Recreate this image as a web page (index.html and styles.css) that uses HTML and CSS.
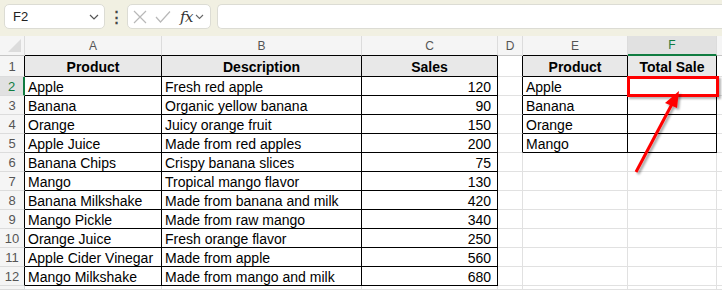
FILE: index.html
```html
<!DOCTYPE html>
<html>
<head>
<meta charset="utf-8">
<link rel="stylesheet" href="styles.css">
</head>
<body>
<div class="app">
  <div class="toolbar">
    <div class="namebox"><span class="nb-text">F2</span>
      <svg class="chev" width="10" height="6" viewBox="0 0 10 6"><path d="M1 1 L5 5 L9 1" fill="none" stroke="#555" stroke-width="1.2"/></svg>
    </div>
    <div class="vdots">⋮</div>
    <div class="fxbox">
      <svg width="14" height="14" viewBox="0 0 14 14"><path d="M1 1 L13 13 M13 1 L1 13" stroke="#b8b8b8" stroke-width="1.2" fill="none"/></svg>
      <svg width="16" height="14" viewBox="0 0 16 14"><path d="M1 7 L5.5 12 L15 1.5" stroke="#b8b8b8" stroke-width="1.2" fill="none"/></svg>
      <span class="fx">fx</span>
      <svg class="chev2" width="9" height="6" viewBox="0 0 9 6"><path d="M1 1 L4.5 4.5 L8 1" fill="none" stroke="#666" stroke-width="1.1"/></svg>
    </div>
    <div class="formula"></div>
  </div>
  <div class="sheet">
    <div class="c ch corner"><span class="tri"></span></div>
    <div class="c ch tb">A</div>
    <div class="c ch tb">B</div>
    <div class="c ch tb">C</div>
    <div class="c ch">D</div>
    <div class="c ch tb">E</div>
    <div class="c ch sel">F</div>
    <div class="c ch"></div>

    <div class="c rh">1</div>
    <div class="c t hd">Product</div>
    <div class="c t hd">Description</div>
    <div class="c t hd">Sales</div>
    <div class="c bl"></div>
    <div class="c t hd">Product</div>
    <div class="c t hd">Total Sale</div>
    <div class="c"></div>

    <div class="c rh sel">2</div>
    <div class="c t">Apple</div>
    <div class="c t">Fresh red apple</div>
    <div class="c t n">120</div>
    <div class="c bl"></div>
    <div class="c t">Apple</div>
    <div class="c t"></div>
    <div class="c"></div>

    <div class="c rh">3</div>
    <div class="c t">Banana</div>
    <div class="c t">Organic yellow banana</div>
    <div class="c t n">90</div>
    <div class="c bl"></div>
    <div class="c t">Banana</div>
    <div class="c t"></div>
    <div class="c"></div>

    <div class="c rh">4</div>
    <div class="c t">Orange</div>
    <div class="c t">Juicy orange fruit</div>
    <div class="c t n">150</div>
    <div class="c bl"></div>
    <div class="c t">Orange</div>
    <div class="c t"></div>
    <div class="c"></div>

    <div class="c rh">5</div>
    <div class="c t">Apple Juice</div>
    <div class="c t">Made from red apples</div>
    <div class="c t n">200</div>
    <div class="c bl"></div>
    <div class="c t">Mango</div>
    <div class="c t"></div>
    <div class="c"></div>

    <div class="c rh">6</div>
    <div class="c t">Banana Chips</div>
    <div class="c t">Crispy banana slices</div>
    <div class="c t n">75</div>
    <div class="c"></div>
    <div class="c"></div>
    <div class="c"></div>
    <div class="c"></div>

    <div class="c rh">7</div>
    <div class="c t">Mango</div>
    <div class="c t">Tropical mango flavor</div>
    <div class="c t n">130</div>
    <div class="c"></div>
    <div class="c"></div>
    <div class="c"></div>
    <div class="c"></div>

    <div class="c rh">8</div>
    <div class="c t">Banana Milkshake</div>
    <div class="c t">Made from banana and milk</div>
    <div class="c t n">420</div>
    <div class="c"></div>
    <div class="c"></div>
    <div class="c"></div>
    <div class="c"></div>

    <div class="c rh">9</div>
    <div class="c t">Mango Pickle</div>
    <div class="c t">Made from raw mango</div>
    <div class="c t n">340</div>
    <div class="c"></div>
    <div class="c"></div>
    <div class="c"></div>
    <div class="c"></div>

    <div class="c rh">10</div>
    <div class="c t">Orange Juice</div>
    <div class="c t">Fresh orange flavor</div>
    <div class="c t n">250</div>
    <div class="c"></div>
    <div class="c"></div>
    <div class="c"></div>
    <div class="c"></div>

    <div class="c rh">11</div>
    <div class="c t">Apple Cider Vinegar</div>
    <div class="c t">Made from apple</div>
    <div class="c t n">560</div>
    <div class="c"></div>
    <div class="c"></div>
    <div class="c"></div>
    <div class="c"></div>

    <div class="c rh">12</div>
    <div class="c t">Mango Milkshake</div>
    <div class="c t">Made from mango and milk</div>
    <div class="c t n">680</div>
    <div class="c"></div>
    <div class="c"></div>
    <div class="c"></div>
    <div class="c"></div>

    <div class="c rh last"></div>
    <div class="c"></div>
    <div class="c"></div>
    <div class="c"></div>
    <div class="c"></div>
    <div class="c"></div>
    <div class="c"></div>
    <div class="c"></div>
  </div>
  <div class="redbox"></div>
  <svg class="arrow" width="722" height="290" viewBox="0 0 722 290">
    <defs>
      <filter id="sh" x="-20%" y="-20%" width="140%" height="140%">
        <feDropShadow dx="2" dy="2" stdDeviation="1.2" flood-color="#000" flood-opacity="0.35"/>
      </filter>
    </defs>
    <g filter="url(#sh)">
      <line x1="636" y1="172" x2="672" y2="104" stroke="#ff0000" stroke-width="3"/>
      <polygon points="679,91 665,103 677,108" fill="#ff0000"/>
    </g>
  </svg>
</div>
</body>
</html>
```
FILE: styles.css
```css
html, body {
  margin: 0;
  padding: 0;
}
body {
  width: 722px;
  height: 290px;
  overflow: hidden;
  font-family: "Liberation Sans", Arial, sans-serif;
  background: #ffffff;
}
.app {
  position: relative;
  width: 722px;
  height: 290px;
  overflow: hidden;
}
.toolbar {
  height: 36px;
  background: #f1f0e2;
  display: flex;
  align-items: flex-start;
  padding: 4px 0 0 4px;
  box-sizing: border-box;
}
.namebox {
  width: 101px;
  height: 25px;
  box-sizing: border-box;
  background: #fff;
  border: 1px solid #dcdcd4;
  border-radius: 5px;
  display: flex;
  align-items: center;
  justify-content: space-between;
  padding: 0 5px 0 8px;
  font-size: 13px;
  color: #222;
}
.vdots {
  width: 22px;
  height: 25px;
  display: flex;
  align-items: center;
  justify-content: center;
  font-size: 15px;
  font-weight: bold;
  color: #444;
}
.fxbox {
  width: 84px;
  height: 25px;
  box-sizing: border-box;
  background: #fff;
  border: 1px solid #dcdcd4;
  border-radius: 5px;
  display: flex;
  align-items: center;
  padding: 0 3px 0 5px;
  gap: 8px;
}
.fx {
  font-family: "DejaVu Serif", "Liberation Serif", serif;
  font-style: italic;
  font-size: 15px;
  color: #333;
  margin-left: 1px;
  letter-spacing: -0.5px;
}
.chev2 {
  margin-left: -6px;
}
.formula {
  flex: 1;
  height: 25px;
  margin-left: 6px;
  box-sizing: border-box;
  background: #fff;
  border: 1px solid #dcdcd4;
  border-right: none;
  border-radius: 5px 0 0 5px;
}
.sheet {
  display: grid;
  grid-template-columns: 25px 137px 200px 136px 25px 105px 89px 1fr;
  grid-template-rows: 20px 21px repeat(11, 19px) 1fr;
  height: 254px;
}
.c {
  box-sizing: border-box;
  border-right: 1px solid #e1e1e1;
  border-bottom: 1px solid #e1e1e1;
  font-size: 14px;
  color: #000;
  padding: 1px 3px 0 3px;
  display: flex;
  align-items: center;
  white-space: nowrap;
  overflow: hidden;
}
.ch {
  background: #f5f5f5;
  color: #555;
  font-size: 12px;
  justify-content: center;
  border-right: 1px solid #dcdcdc;
  border-bottom: 1px solid #c6c6c6;
  padding: 0;
}
.ch.tb {
  border-bottom: 1px solid #000;
}
.ch.sel {
  background: #e1e1e1;
  color: #107c41;
  border-bottom: 2px solid #107c41;
}
.corner {
  position: relative;
}
.tri {
  position: absolute;
  right: 3px;
  bottom: 3px;
  width: 0;
  height: 0;
  border-left: 13px solid transparent;
  border-bottom: 13px solid #dcdcdc;
}
.rh {
  background: #f5f5f5;
  color: #555;
  font-size: 13px;
  justify-content: center;
  border-right: 1px solid #000;
  border-bottom: 1px solid #dcdcdc;
  padding: 1px 0 0 0;
}
.rh.sel {
  background: #e1e1e1;
  color: #107c41;
  border-right: 2px solid #107c41;
}
.rh.last {
  border-right: 1px solid #dcdcdc;
}
.t {
  border-right: 1px solid #000;
  border-bottom: 1px solid #000;
}
.bl {
  border-right: 1px solid #000;
}
.hd {
  font-weight: bold;
  justify-content: center;
  background: #e8e8e8;
}
.n {
  justify-content: flex-end;
  padding-right: 6px;
}
.redbox {
  position: absolute;
  left: 627px;
  top: 76px;
  width: 92px;
  height: 21px;
  box-sizing: border-box;
  border: 3px solid #ff0000;
  box-shadow: 2px 2px 2px rgba(0, 0, 0, 0.3);
}
.arrow {
  position: absolute;
  left: 0;
  top: 0;
  pointer-events: none;
}
```
